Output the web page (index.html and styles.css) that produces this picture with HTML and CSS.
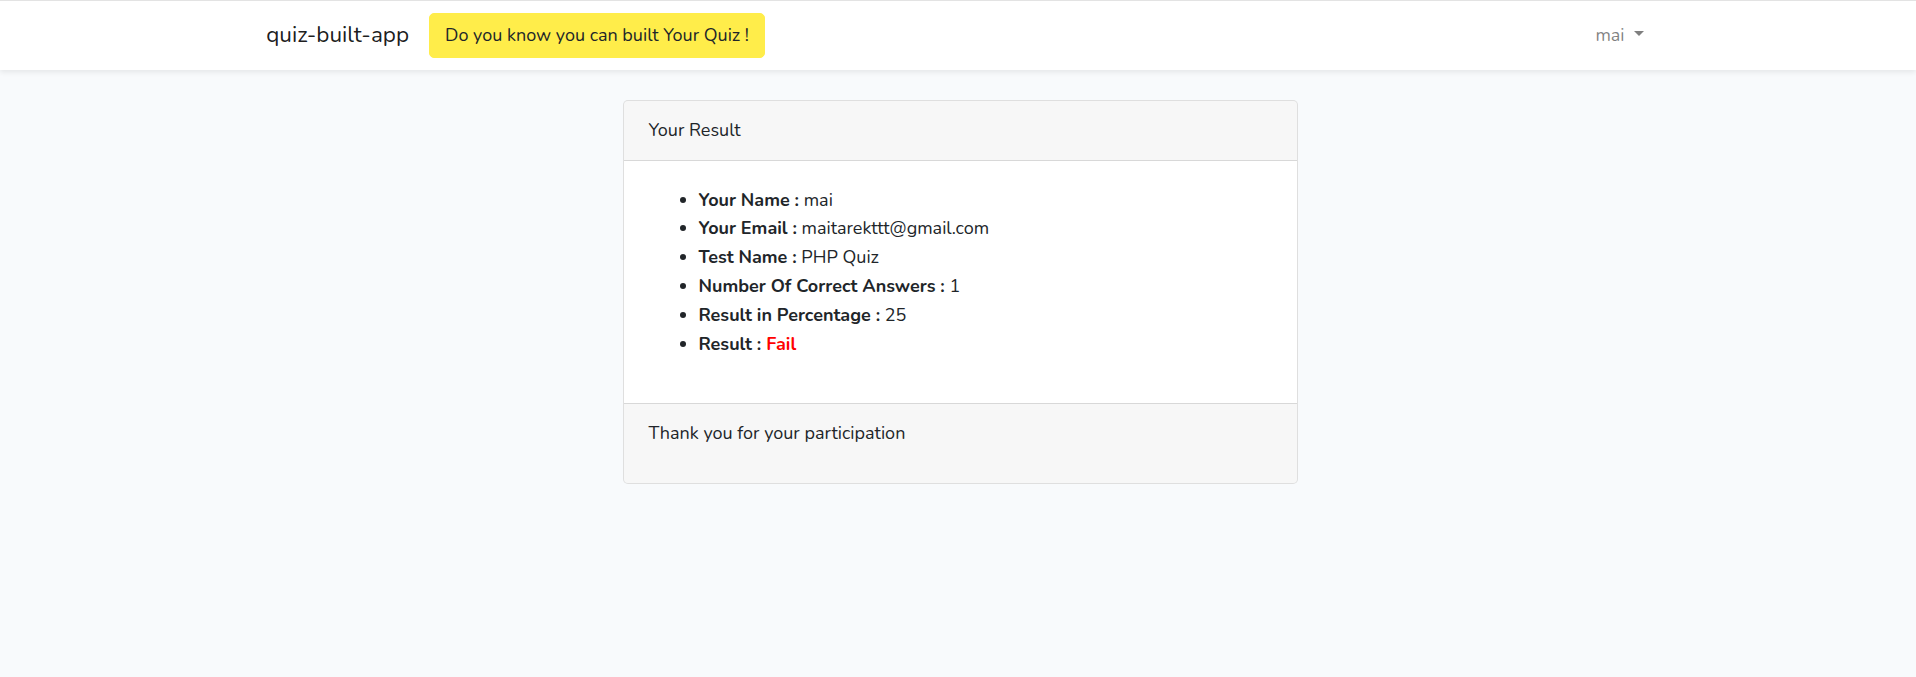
FILE: index.html
```html
<!DOCTYPE html>
<html lang="en">
<head>
<meta charset="utf-8">
<title>quiz-built-app</title>
<link rel="stylesheet" href="styles.css">
</head>
<body>
<div class="app">
  <nav class="navbar">
    <div class="container nav-inner">
      <a class="brand" href="#">quiz-built-app</a>
      <a class="btn-warning" href="#">Do you know you can built Your Quiz !</a>
      <div class="spacer"></div>
      <a class="nav-link" href="#">mai <span class="caret"></span></a>
    </div>
  </nav>
  <main class="main">
    <div class="card">
      <div class="card-header">Your Result</div>
      <div class="card-body">
        <ul class="result-list">
          <li><b>Your Name :</b> mai</li>
          <li><b>Your Email :</b> maitarekttt@gmail.com</li>
          <li><b>Test Name :</b> PHP Quiz</li>
          <li><b>Number Of Correct Answers :</b> 1</li>
          <li><b>Result in Percentage :</b> 25</li>
          <li><b>Result : <span class="fail">Fail</span></b></li>
        </ul>
      </div>
      <div class="card-footer">
        <p>Thank you for your participation</p>
      </div>
    </div>
  </main>
</div>
</body>
</html>
```
FILE: styles.css
```css
* { box-sizing: border-box; }
html, body { margin: 0; padding: 0; }
body {
  background: #f8fafc;
  color: #212529;
  font-family: "Nunito", "Lato", "Noto Sans", sans-serif;
  font-size: 18px;
  line-height: 1.6;
}
a { text-decoration: none; }
.app { padding-left: 4px; }
.navbar {
  background: #fff;
  border-top: 1px solid #e3e3e3;
  box-shadow: 0 2.5px 5px rgba(0,0,0,0.075);
  padding: 10px 0;
  margin-left: -4px;
  padding-left: 4px;
}
.container {
  width: 1425px;
  margin: 0 auto;
  padding: 0 18.75px;
}
.nav-inner {
  display: flex;
  align-items: center;
}
.brand {
  color: rgba(0,0,0,0.9);
  font-size: 22.5px;
  margin-right: 20px;
  padding: 5px 0;
  line-height: 1.6;
}
.btn-warning {
  display: inline-block;
  background: #ffed4a;
  border: 1px solid #ffed4a;
  color: #212529;
  border-radius: 5px;
  padding: 7.5px 15px;
  line-height: 1.6;
}
.spacer { flex: 1; }
.nav-link {
  color: rgba(0,0,0,0.5);
  padding: 10px 10px;
  line-height: 1.6;
}
.caret {
  display: inline-block;
  margin-left: 4.6px;
  vertical-align: 4.6px;
  border-top: 5.4px solid;
  border-left: 5.4px solid transparent;
  border-right: 5.4px solid transparent;
}
.main {
  padding: 30px 0;
}
.card {
  width: 675px;
  margin: 0 auto;
  background: #fff;
  border: 1px solid rgba(0,0,0,0.125);
  border-radius: 5px;
  overflow: hidden;
}
.card-header {
  background: rgba(0,0,0,0.03);
  border-bottom: 1px solid rgba(0,0,0,0.125);
  padding: 15px 25px;
}
.card-body {
  padding: 25px;
}
.result-list {
  margin: 0 0 20px;
  padding-left: 50px;
}
.result-list b { font-weight: 700; }
.fail { color: red; }
.card-footer {
  background: rgba(0,0,0,0.03);
  border-top: 1px solid rgba(0,0,0,0.125);
  padding: 15px 25px;
}
.card-footer p { margin: 0 0 20px; }
```
